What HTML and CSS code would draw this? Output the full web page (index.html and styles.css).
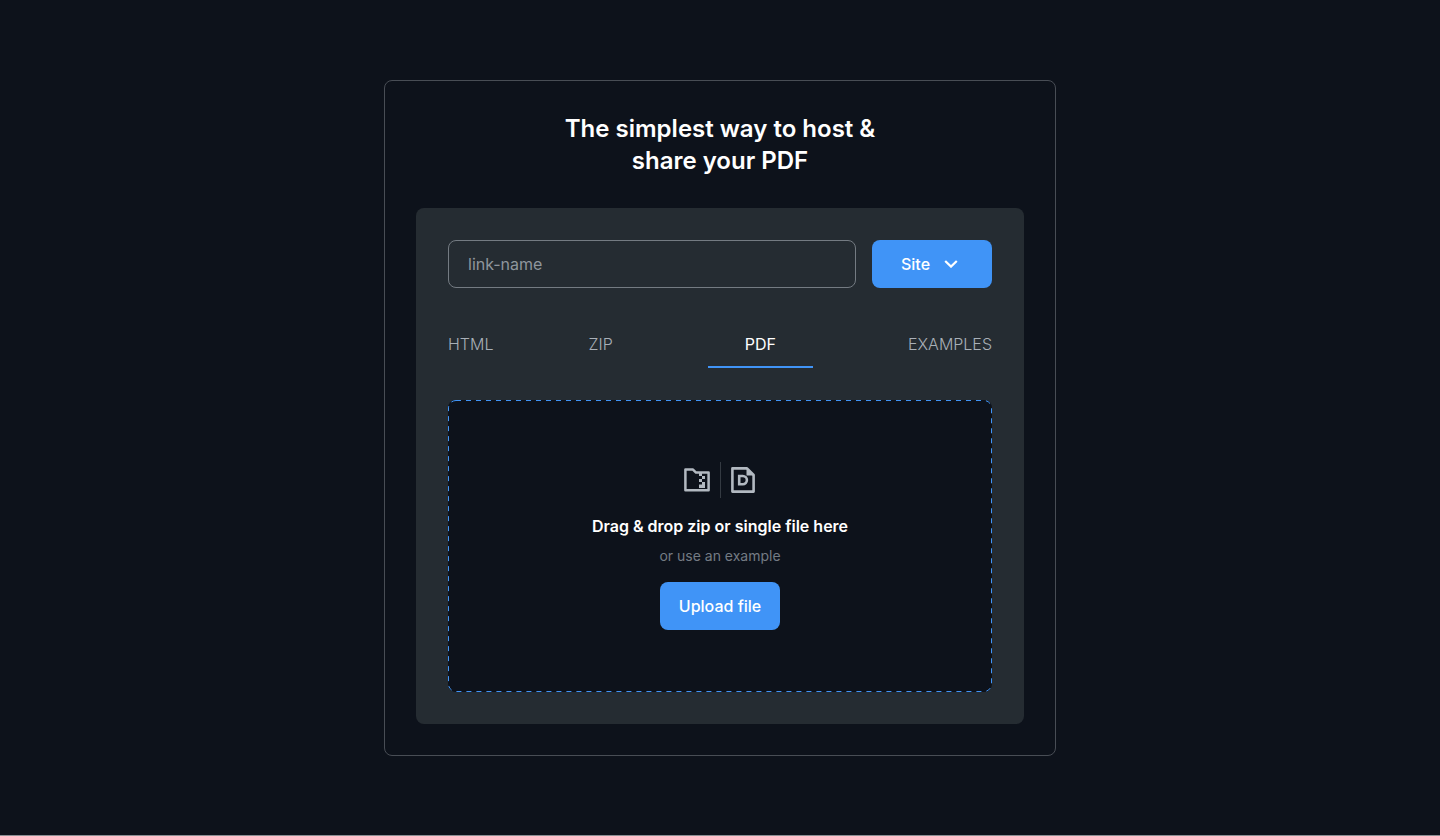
FILE: index.html
```html
<!DOCTYPE html>
<html lang="en">
<head>
<meta charset="utf-8">
<meta name="viewport" content="width=device-width, initial-scale=1">
<title>Host and share your PDF</title>
<link rel="stylesheet" href="styles.css">
</head>
<body>
<main class="card">
  <h1 class="title">The simplest way to host &amp; share your PDF</h1>
  <form class="panel">
    <div class="link-row">
      <input class="link-input" type="text" placeholder="link-name" aria-label="Link name">
      <div class="type">
        <select class="type-select" aria-label="Link type">
          <option>Site</option>
        </select>
        <svg class="type-arrow" viewBox="0 0 14 8" width="14" height="8" fill="none" stroke="currentColor" stroke-width="2.2" aria-hidden="true"><path d="M1.2 1 7 6.6 12.8 1"/></svg>
      </div>
    </div>
    <div class="tabs" role="tablist">
      <button class="tab" type="button" role="tab" aria-selected="false">HTML</button>
      <button class="tab" type="button" role="tab" aria-selected="false">ZIP</button>
      <button class="tab tab-active" type="button" role="tab" aria-selected="true">PDF</button>
      <button class="tab" type="button" role="tab" aria-selected="false">EXAMPLES</button>
    </div>
    <div class="drop">
      <svg class="drop-outline" aria-hidden="true"><rect class="drop-dash" x="0.5" y="0.5" rx="7.5"/></svg>
      <div class="icons">
        <svg width="26" height="24" viewBox="0 0 26 24" aria-hidden="true">
          <path d="M1.4 1.6H9L12 4.6H24.6V22.2H1.4Z" fill="none" stroke="currentColor" stroke-width="2.5" stroke-linejoin="round"/>
          <path d="M15 5h3v3h-3zM18 8h3v3h-3zM15 11h3v3h-3zM18 14h3v6h-6v-3.500h3z" fill="currentColor"/>
        </svg>
        <span class="divider"></span>
        <svg width="24" height="26" viewBox="0 0 24 26" aria-hidden="true">
          <path d="M1.4 1.4H16L22.6 8V24.6H1.4Z" fill="none" stroke="currentColor" stroke-width="2.6" stroke-linejoin="round"/>
          <path d="M15.5 1v7.5H23z" fill="currentColor"/>
          <path d="M8.2 9h3.600a4.100 4.100 0 0 1 0 8.200H8.200Z" fill="none" stroke="currentColor" stroke-width="2.6"/>
        </svg>
      </div>
      <p class="drop-title">Drag &amp; drop zip or single file here</p>
      <p class="drop-note">or use an example</p>
      <button class="upload" type="button">Upload file</button>
    </div>
  </form>
</main>
</body>
</html>
```
FILE: styles.css
```css
* {
  box-sizing: border-box;
}

body {
  margin: 0;
  min-height: 100vh;
  padding: 80px 16px 79px;
  border-bottom: 1px solid #8b8e93;
  background: #0d121b;
  color: #fff;
  font: 400 16px/24px Inter, "Liberation Sans", sans-serif;
}

button,
input,
select {
  font: inherit;
}

.card {
  max-width: 672px;
  margin: 0 auto;
  padding: 32px 31px 31px;
  border: 1px solid #484d55;
  border-radius: 8px;
}

.title {
  max-width: 340px;
  margin: 0 auto 31px;
  font-size: 24px;
  font-weight: 600;
  line-height: 32px;
  text-align: center;
}

.panel {
  padding: 32px;
  border-radius: 8px;
  background: #252c32;
}

.link-row {
  display: flex;
  gap: 16px;
}

.link-input {
  flex: 1;
  min-width: 0;
  height: 48px;
  padding: 0 19px;
  border: 1px solid #747b82;
  border-radius: 8px;
  background: transparent;
  color: #fff;
}

.link-input::placeholder {
  color: #8f969d;
  opacity: 1;
}

.type {
  position: relative;
}

.type-select {
  appearance: none;
  width: 120px;
  height: 48px;
  padding: 0 48px 0 29px;
  border: 0;
  border-radius: 8px;
  background: #4094f7;
  color: #fff;
  font-weight: 500;
}

.type-arrow {
  position: absolute;
  top: 20px;
  right: 34px;
  pointer-events: none;
}

.tabs {
  display: flex;
  justify-content: space-between;
  margin: 44px 0 32px;
}

.tab {
  padding: 0 0 10px;
  border: 0;
  border-bottom: 2px solid transparent;
  background: none;
  color: #a9b0b8;
  font-weight: 300;
}

.tab-active {
  padding: 0 37px 10px;
  border-color: #4094f7;
  color: #fff;
  font-weight: 400;
}

.drop {
  position: relative;
  display: flex;
  flex-direction: column;
  align-items: center;
  padding: 62px 16px;
  border-radius: 8px;
  background: #0d121b;
}

.drop-outline {
  position: absolute;
  inset: 0;
  width: 100%;
  height: 100%;
}

.drop-dash {
  width: calc(100% - 1px);
  height: calc(100% - 1px);
  fill: none;
  stroke: #4094f7;
  stroke-dasharray: 5 5;
}

.icons {
  display: flex;
  align-items: center;
  gap: 10px;
  height: 36px;
  margin-bottom: 16px;
  padding-right: 2px;
  color: #b2b9c1;
}

.divider {
  width: 1px;
  height: 36px;
  background: #343a42;
}

.drop-title {
  margin: 0;
  font-weight: 600;
}

.drop-note {
  margin: 8px 0 16px;
  color: #747b84;
  font-size: 14px;
  line-height: 20px;
}

.upload {
  position: relative;
  width: 120px;
  height: 48px;
  padding: 0;
  border: 0;
  border-radius: 8px;
  background: #4094f7;
  color: #fff;
  font-weight: 500;
}
```
